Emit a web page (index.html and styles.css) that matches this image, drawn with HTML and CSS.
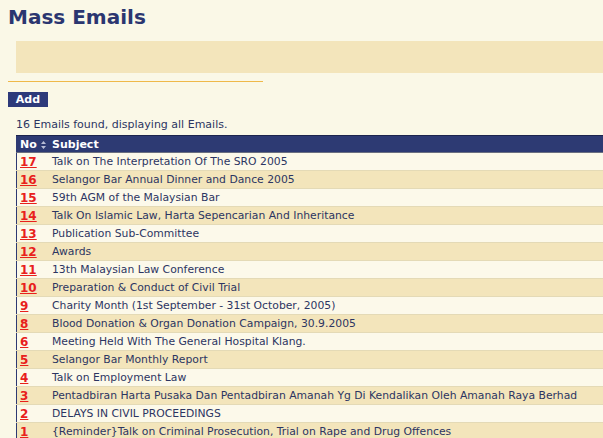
FILE: index.html
```html
<!doctype html>
<html lang="en">
<head>
    <meta charset="UTF-8">
    <title>Mass Emails</title>
    <link rel="stylesheet" href="styles.css">
</head>
<body>
<div class="page">
    <h1 class="title">Mass Emails</h1>
    <div class="filter-bar"></div>
    <div class="sep"></div>
    <div class="tool"><span class="btn-add">Add</span></div>
    <div class="count">16 Emails found, displaying all Emails.</div>
    <table class="list">
        <tr class="head">
            <th class="no">No<svg class="sort" width="5" height="8" viewBox="0 0 5 8"><path d="M2.5 0 L5 3 L0 3 Z M0 5 L5 5 L2.5 8 Z" fill="#b8bdd6"/></svg></th>
            <th>Subject</th>
        </tr>
        <tr><td class="no"><a href="#">17</a></td><td>Talk on The Interpretation Of The SRO 2005</td></tr>
        <tr><td class="no"><a href="#">16</a></td><td>Selangor Bar Annual Dinner and Dance 2005</td></tr>
        <tr><td class="no"><a href="#">15</a></td><td>59th AGM of the Malaysian Bar</td></tr>
        <tr><td class="no"><a href="#">14</a></td><td>Talk On Islamic Law, Harta Sepencarian And Inheritance</td></tr>
        <tr><td class="no"><a href="#">13</a></td><td>Publication Sub-Committee</td></tr>
        <tr><td class="no"><a href="#">12</a></td><td>Awards</td></tr>
        <tr><td class="no"><a href="#">11</a></td><td>13th Malaysian Law Conference</td></tr>
        <tr><td class="no"><a href="#">10</a></td><td>Preparation &amp; Conduct of Civil Trial</td></tr>
        <tr><td class="no"><a href="#">9</a></td><td>Charity Month (1st September - 31st October, 2005)</td></tr>
        <tr><td class="no"><a href="#">8</a></td><td>Blood Donation &amp; Organ Donation Campaign, 30.9.2005</td></tr>
        <tr><td class="no"><a href="#">6</a></td><td>Meeting Held With The General Hospital Klang.</td></tr>
        <tr><td class="no"><a href="#">5</a></td><td>Selangor Bar Monthly Report</td></tr>
        <tr><td class="no"><a href="#">4</a></td><td>Talk on Employment Law</td></tr>
        <tr><td class="no"><a href="#">3</a></td><td>Pentadbiran Harta Pusaka Dan Pentadbiran Amanah Yg Di Kendalikan Oleh Amanah Raya Berhad</td></tr>
        <tr><td class="no"><a href="#">2</a></td><td>DELAYS IN CIVIL PROCEEDINGS</td></tr>
        <tr><td class="no"><a href="#">1</a></td><td>{Reminder}Talk on Criminal Prosecution, Trial on Rape and Drug Offences</td></tr>
    </table>
</div>
</body>
</html>
```

FILE: styles.css
```css
*{
    padding: 0;
    margin: 0;
}
body{
    background: #faf8e7;
    font-family: Verdana, "DejaVu Sans", sans-serif;
    font-size: 11px;
    color: #2c3562;
    overflow: hidden;
}
.page{
    padding-left: 8px;
}
.title{
    font-size: 20px;
    line-height: 24px;
    margin-top: 5px;
    color: #2b3670;
}
.filter-bar{
    height: 32px;
    margin: 12px 0 0 8px;
    background: #f3e5bb;
}
.sep{
    width: 255px;
    height: 1px;
    margin-top: 8px;
    background: #efb94a;
}
.tool{
    margin-top: 10px;
    height: 15px;
}
.btn-add{
    display: inline-block;
    width: 40px;
    height: 15px;
    line-height: 15px;
    text-align: center;
    background: #2d3a7a;
    color: #fff;
    font-weight: bold;
    font-size: 11px;
}
.count{
    margin: 11px 0 0 8px;
    line-height: 13px;
    color: #2c3562;
}
.list{
    margin: 4px 0 0 8px;
    width: 587px;
    table-layout: fixed;
    border-collapse: collapse;
    border-left: 1px solid #2d3a73;
}
.list th{
    height: 16px;
    background: #2d3a73;
    color: #fff;
    text-align: left;
    font-weight: bold;
    padding: 0 3px;
    white-space: nowrap;
    border-top: 1px solid #1c244d;
    border-bottom: 1px solid #6a6f80;
}
.list td{
    height: 17px;
    padding: 0 3px;
    border-bottom: 1px solid #e4dab6;
    white-space: nowrap;
    overflow: visible;
    font-size: 10.8px;
}
.list .no{
    width: 26px;
}
.list tr:nth-child(even) td{
    background: #fcf9ea;
}
.list tr:nth-child(odd) td{
    background: #f3e5bb;
}
.list a{
    color: #e8201c;
    font-weight: bold;
    font-size: 12px;
}
.sort{
    margin-left: 4px;
    vertical-align: -1px;
}
```
